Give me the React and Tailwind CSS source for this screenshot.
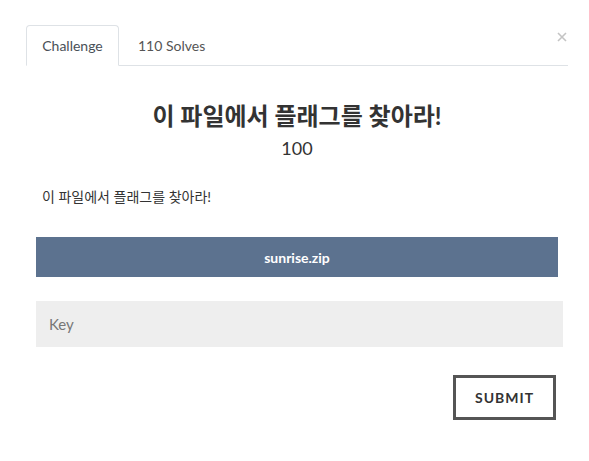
export default function App() {
  return (
    <div className="w-[589px] h-[461px] bg-white overflow-hidden" style={{ fontFamily: 'Lato, "Noto Sans CJK KR", sans-serif' }}>
      <div className="ml-[26px] mr-[21px] pt-[25px]">
        <div className="flex items-stretch h-[41px] border-b border-[#dee2e6]">
          <div className="w-[93px] -mb-px flex items-center justify-center border border-[#dee2e6] border-b-white rounded-t-[4px] text-[14px] text-[#495057] bg-white">
            Challenge
          </div>
          <div className="pl-[19px] flex items-center text-[14px] text-[#555]">110 Solves</div>
          <div className="ml-auto mr-[1px] pt-[7px]">
            <svg width="10" height="10" viewBox="0 0 10 10" className="block">
              <path d="M1 1L9 9M9 1L1 9" stroke="#c4c4c4" strokeWidth="1.6" />
            </svg>
          </div>
        </div>
        <div className="pt-[34px] text-center">
          <div className="text-[24px] font-bold text-[#333] leading-[32px]">이 파일에서 플래그를 찾아라!</div>
          <div className="text-[18px] text-[#333] leading-[24px] mt-[4px]">100</div>
        </div>
        <div className="mt-[27px] ml-[16px] text-[14px] text-[#333] leading-[20px]">이 파일에서 플래그를 찾아라!</div>
        <div className="mt-[30px] mx-[10px] h-[40px] bg-[#5c728f] flex items-center justify-center text-white font-bold text-[14px]">
          sunrise.zip
        </div>
        <div className="mt-[24px] ml-[10px] mr-[5px] h-[46px] bg-[#eeeeee] flex items-center pl-[13px] text-[15px] text-[#777]">
          Key
        </div>
        <div className="mt-[28px] flex justify-end mr-[12px]">
          <div className="w-[103px] h-[45px] border-[3px] border-[#555] flex items-center justify-center font-bold text-[14px] tracking-[1px] text-[#333]">
            SUBMIT
          </div>
        </div>
      </div>
    </div>
  );
}
